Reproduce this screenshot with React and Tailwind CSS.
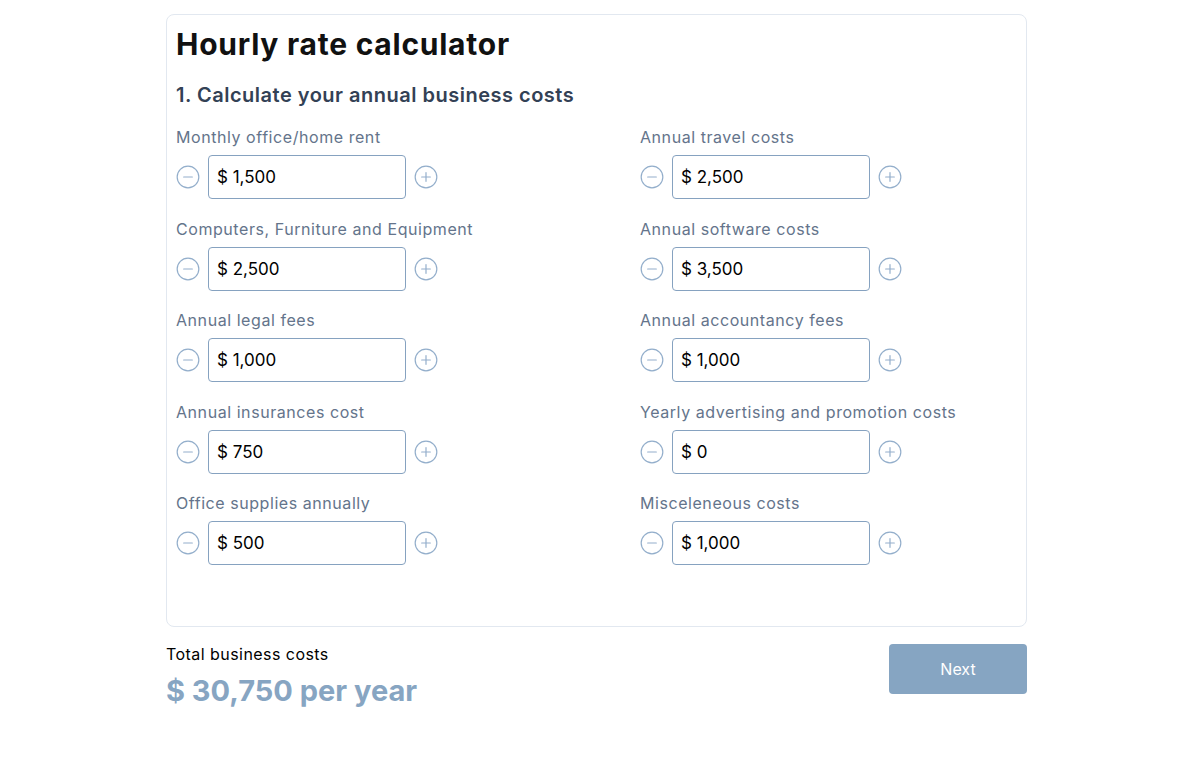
import { CirclePlus, CircleMinus } from 'lucide-react';

const fields = [
  ['Monthly office/home rent', '1,500'],
  ['Annual travel costs', '2,500'],
  ['Computers, Furniture and Equipment', '2,500'],
  ['Annual software costs', '3,500'],
  ['Annual legal fees', '1,000'],
  ['Annual accountancy fees', '1,000'],
  ['Annual insurances cost', '750'],
  ['Yearly advertising and promotion costs', '0'],
  ['Office supplies annually', '500'],
  ['Misceleneous costs', '1,000'],
];

const CostField = ({ label, value }) => (
  <div>
    <label className="block text-[16px] leading-6 tracking-[0.035em] text-[#64748b] mb-1.5">{label}</label>
    <div className="flex items-center">
      <button type="button" className="-ml-px text-[#93aecb]">
        <CircleMinus size={26} strokeWidth={1.1} />
      </button>
      <input
        type="text"
        readOnly
        value={`$ ${value}`}
        className="ml-[7px] w-[198px] h-[44px] border border-[#86a2c0] rounded-[4px] px-2 text-[17px] text-black focus:outline-none"
      />
      <button type="button" className="ml-[7px] text-[#93aecb]">
        <CirclePlus size={26} strokeWidth={1.1} />
      </button>
    </div>
  </div>
);

export default function App() {
  return (
    <div className="min-h-screen bg-white pt-[14px] font-['Inter',sans-serif]">
      <div className="ml-[166px] w-[861px]">
        <div className="border border-[#e2e8f0] rounded-lg px-[9px] pt-[11px] pb-[61px]">
          <h1 className="text-[30px] leading-9 font-bold tracking-[0.025em] text-[#111]">Hourly rate calculator</h1>
          <h2 className="mt-[19px] text-[20px] leading-7 font-semibold tracking-[0.025em] text-[#334155]">
            1. Calculate your annual business costs
          </h2>
          <div className="mt-4 grid grid-cols-[464px_1fr] gap-y-[17.5px]">
            {fields.map(([label, value]) => (
              <CostField key={label} label={label} value={value} />
            ))}
          </div>
        </div>
        <div className="mt-[17px] flex justify-between items-start">
          <div className="-mt-[2px]">
            <div className="text-[16px] leading-6 tracking-[0.028em] text-black">Total business costs</div>
            <div className="mt-[7px] text-[29px] leading-9 font-bold text-[#87a5c2]">$ 30,750 per year</div>
          </div>
          <button type="button" className="w-[138px] h-[50px] rounded-[4px] bg-[#86a5c2] text-white text-[16px]">
            Next
          </button>
        </div>
      </div>
    </div>
  );
}
